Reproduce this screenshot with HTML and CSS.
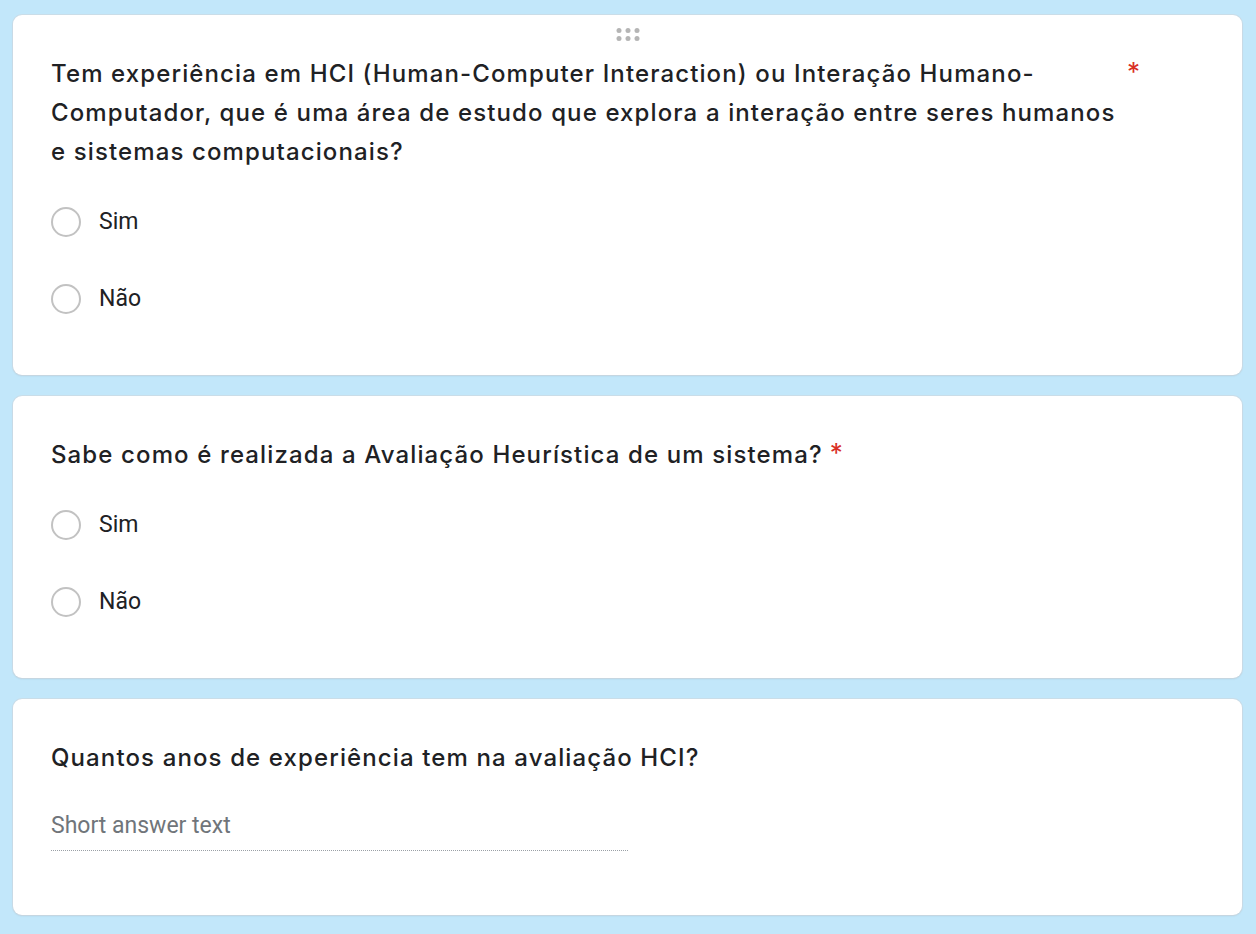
FILE: index.html
```html
<!DOCTYPE html>
<html lang="pt">
<head>
<meta charset="utf-8">
<title>Formulário</title>
<link rel="stylesheet" href="styles.css">
</head>
<body>
<main class="form">
  <section class="card">
    <div class="drag-handle" aria-hidden="true">
      <span></span><span></span><span></span><span></span><span></span><span></span>
    </div>
    <div class="question-head">
      <h2 class="question-title">Tem experiência em HCI (Human-Computer Interaction) ou Interação Humano-Computador, que é uma área de estudo que explora a interação entre seres humanos e sistemas computacionais?</h2>
      <span class="required">*</span>
    </div>
    <div class="options">
      <label class="option"><span class="radio"></span><span class="option-label">Sim</span></label>
      <label class="option"><span class="radio"></span><span class="option-label">Não</span></label>
    </div>
  </section>

  <section class="card">
    <div class="question-head">
      <h2 class="question-title">Sabe como é realizada a Avaliação Heurística de um sistema?</h2>
      <span class="required">*</span>
    </div>
    <div class="options">
      <label class="option"><span class="radio"></span><span class="option-label">Sim</span></label>
      <label class="option"><span class="radio"></span><span class="option-label">Não</span></label>
    </div>
  </section>

  <section class="card card-short">
    <div class="question-head">
      <h2 class="question-title">Quantos anos de experiência tem na avaliação HCI?</h2>
    </div>
    <div class="short-answer">Short answer text</div>
  </section>
</main>
</body>
</html>
```

FILE: styles.css
```css
html, body {
  margin: 0;
  padding: 0;
}

body {
  background: #c2e7fa;
  font-family: Roboto, "Liberation Sans", sans-serif;
  color: #202124;
}

.form {
  display: flex;
  flex-direction: column;
  gap: 21px;
  padding: 15px 14px 20px 13px;
}

.card {
  position: relative;
  background: #ffffff;
  border-radius: 9px;
  box-shadow: 0 0 0 1px rgba(210, 214, 218, 0.55), 0 1px 2px rgba(60, 64, 67, 0.12);
  padding: 39px 38px 38px 38px;
}

.drag-handle {
  position: absolute;
  top: 13px;
  left: 50%;
  transform: translateX(-50%);
  display: grid;
  grid-template-columns: repeat(3, 5px);
  gap: 3px 4px;
}

.drag-handle span {
  width: 5px;
  height: 5px;
  border-radius: 50%;
  background: #b5b5b5;
}

.question-head {
  display: flex;
  align-items: flex-start;
  padding-right: 64px;
}

.question-title {
  margin: 0;
  font-family: Inter, "Noto Sans", sans-serif;
  font-weight: 500;
  font-size: 24px;
  letter-spacing: 1.12px;
  line-height: 39px;
  color: #202124;
}

.required {
  color: #d93025;
  font-family: Inter, "Noto Sans", sans-serif;
  font-size: 26px;
  line-height: 36px;
  padding-left: 7px;
  flex: none;
}

.options {
  display: flex;
  flex-direction: column;
  margin-top: 12px;
}

.option {
  display: flex;
  align-items: center;
  height: 77px;
}

.radio {
  box-sizing: border-box;
  width: 30px;
  height: 30px;
  border: 2px solid #c2c2c2;
  border-radius: 50%;
  flex: none;
}

.option-label {
  margin-left: 18px;
  font-size: 23px;
  color: #202124;
}

.card-short {
  padding-bottom: 64px;
}

.short-answer {
  margin-top: 37px;
  width: 577px;
  font-size: 23px;
  line-height: 24px;
  color: #70757a;
  padding-bottom: 12px;
  border-bottom: 1px dotted #9aa0a6;
}
```
